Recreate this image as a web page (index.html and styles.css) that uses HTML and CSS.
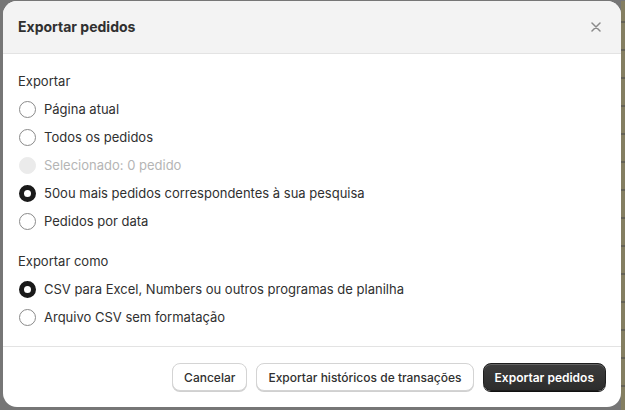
FILE: index.html
```html
<!DOCTYPE html>
<html lang="pt">
<head>
<meta charset="utf-8">
<title>Exportar pedidos</title>
<link rel="stylesheet" href="styles.css">
</head>
<body>
<div class="backdrop">
  <div class="modal">
    <div class="modal-header">
      <h2 class="modal-title">Exportar pedidos</h2>
      <button class="close-btn" aria-label="Fechar">
        <svg width="10" height="10" viewBox="0 0 10 10"><path d="M1 1L9 9M9 1L1 9" stroke="#8a8a8a" stroke-width="1.5" stroke-linecap="round"/></svg>
      </button>
    </div>
    <div class="modal-body">
      <div class="group">
        <div class="group-label">Exportar</div>
        <label class="radio-row"><span class="radio"></span><span>Página atual</span></label>
        <label class="radio-row"><span class="radio"></span><span>Todos os pedidos</span></label>
        <label class="radio-row disabled"><span class="radio"></span><span>Selecionado: 0 pedido</span></label>
        <label class="radio-row"><span class="radio checked"></span><span>50ou mais pedidos correspondentes à sua pesquisa</span></label>
        <label class="radio-row"><span class="radio"></span><span>Pedidos por data</span></label>
      </div>
      <div class="group">
        <div class="group-label">Exportar como</div>
        <label class="radio-row"><span class="radio checked"></span><span>CSV para Excel, Numbers ou outros programas de planilha</span></label>
        <label class="radio-row"><span class="radio"></span><span>Arquivo CSV sem formatação</span></label>
      </div>
    </div>
    <div class="modal-footer">
      <button class="btn">Cancelar</button>
      <button class="btn">Exportar históricos de transações</button>
      <button class="btn btn-primary">Exportar pedidos</button>
    </div>
  </div>
  <div class="side-strip"></div>
</div>
</body>
</html>
```

FILE: styles.css
```css
* { box-sizing: border-box; }
html, body { margin: 0; padding: 0; }
body {
  width: 625px;
  height: 410px;
  overflow: hidden;
  background: #767676;
  font-family: Inter, "Noto Sans", "Liberation Sans", sans-serif;
  color: #303030;
}
.backdrop {
  display: flex;
  height: 410px;
  padding: 1px 0 0 3px;
}
.modal {
  width: 618px;
  height: 406px;
  background: #ffffff;
  border-radius: 14px;
  overflow: hidden;
  display: flex;
  flex-direction: column;
  flex-shrink: 0;
}
.side-strip {
  flex: 1;
  background: repeating-linear-gradient(180deg, #8a8258 0 20px, #5d5a48 20px 22px, #8a8258 22px 28px);
  opacity: 0.7;
}
.modal-header {
  height: 53px;
  background: #f3f3f3;
  border-bottom: 1px solid #e3e3e3;
  display: flex;
  align-items: center;
  justify-content: space-between;
  padding: 0 11px 0 15px;
}
.modal-title {
  margin: 0;
  font-size: 14px;
  font-weight: 650;
  line-height: 20px;
  color: #303030;
}
.close-btn {
  width: 28px;
  height: 28px;
  border: 0;
  background: transparent;
  display: flex;
  align-items: center;
  justify-content: center;
  padding: 0;
}
.modal-body {
  flex: 1;
  padding: 17px 15px 0 15px;
  display: flex;
  flex-direction: column;
  gap: 20px;
}
.group {
  display: flex;
  flex-direction: column;
  gap: 8px;
}
.group-label, .radio-row {
  font-size: 13px;
  line-height: 20px;
}
.radio-row {
  display: flex;
  align-items: center;
  gap: 8px;
  padding-left: 1px;
}
.radio {
  width: 17px;
  height: 17px;
  border-radius: 50%;
  border: 1px solid #8a8a8a;
  background: #fff;
  flex-shrink: 0;
}
.radio.checked {
  border: 5px solid #1a1a1a;
}
.disabled { color: #b5b5b5; }
.disabled .radio {
  border-color: #ebebeb;
  background: #ebebeb;
}
.modal-footer {
  height: 61px;
  border-top: 1px solid #e3e3e3;
  display: flex;
  justify-content: flex-end;
  align-items: center;
  gap: 9px;
  padding: 0 15px;
}
.btn {
  height: 28px;
  padding: 0 11px;
  border-radius: 8px;
  border: 1px solid #d4d4d4;
  background: #fff;
  box-shadow: 0 1px 0 #d0d0d0;
  font-family: inherit;
  font-size: 12px;
  font-weight: 500;
  color: #303030;
}
.btn-primary {
  background: linear-gradient(#3d3d3d, #2c2c2c);
  border-color: #1e1e1e;
  color: #ffffff;
  font-weight: 600;
  box-shadow: inset 0 1px 0 rgba(255,255,255,0.2), 0 1px 0 #111;
}
```
